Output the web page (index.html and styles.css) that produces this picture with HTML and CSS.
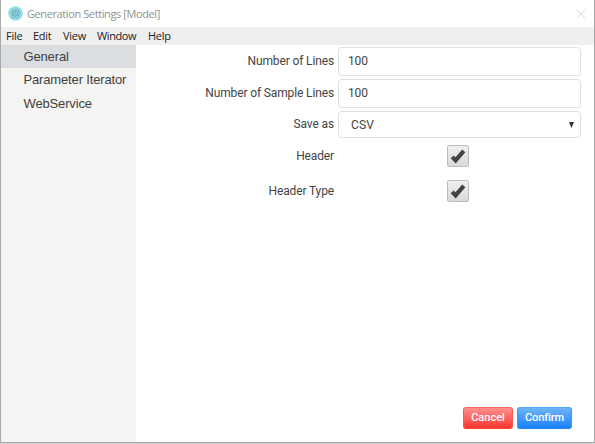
FILE: index.html
```html
<!DOCTYPE html>
<html lang="en">
<head>
<meta charset="utf-8">
<title>Generation Settings [Model]</title>
<link rel="stylesheet" href="styles.css">
</head>
<body>
<div class="window">
  <header class="titlebar">
    <svg class="logo" viewBox="0 0 15 15"><circle cx="7.5" cy="7.5" r="7.3" fill="#94dfeb"/><g fill="none" stroke="#6499a3" stroke-width=".55"><ellipse cx="7.5" cy="7.5" rx="5" ry="2"/><ellipse cx="7.5" cy="7.5" rx="5" ry="2" transform="rotate(60 7.5 7.5)"/><ellipse cx="7.5" cy="7.5" rx="5" ry="2" transform="rotate(120 7.5 7.5)"/></g><circle cx="7.5" cy="7.5" r=".6" fill="#5e929d"/></svg>
    <span class="title">Generation Settings [Model]</span>
    <svg class="close" viewBox="0 0 10 10"><path d="M.5 .5l9 9M9.5 .5l-9 9" stroke="#dedede" stroke-width="1"/></svg>
  </header>
  <nav class="menu"><span class="file">File</span><span class="edit">Edit</span><span class="view">View</span><span class="win">Window</span><span class="help">Help</span></nav>
  <div class="body">
    <aside class="sidebar">
      <div class="item active">General</div>
      <div class="item">Parameter Iterator</div>
      <div class="item">WebService</div>
    </aside>
    <main class="main">
      <div class="form">
        <span class="label">Number of Lines</span><div class="field">100</div>
        <span class="label">Number of Sample Lines</span><div class="field">100</div>
        <span class="label save">Save as</span><div class="field select"><span>CSV</span><svg class="arrow" viewBox="0 0 5 6"><path d="M0 0h5L2.5 6z" fill="#333"/></svg></div>
        <span class="label tick">Header</span><div class="check"><svg viewBox="0 0 16 16"><path d="M2.2 8.9L5.6 12.4 13.8 2.8" fill="none" stroke="#444" stroke-width="4.2"/></svg></div>
        <span class="label tick">Header Type</span><div class="check"><svg viewBox="0 0 16 16"><path d="M2.2 8.9L5.6 12.4 13.8 2.8" fill="none" stroke="#444" stroke-width="4.2"/></svg></div>
      </div>
      <footer class="actions">
        <div class="btn cancel">Cancel</div>
        <div class="btn confirm">Confirm</div>
      </footer>
    </main>
  </div>
</div>
</body>
</html>
```
FILE: styles.css
```css
* { box-sizing: border-box; }
body { margin: 0; background: #d2d2d2; overflow: hidden; }
.window { width: 595px; height: 443px; border: solid #a8a8a8; border-width: 0 1px 1px; background: #fff; display: flex; flex-direction: column; }
.titlebar { height: 27px; display: flex; align-items: center; padding: 0 8px 0 7px; font: 11px "Open Sans", sans-serif; color: #929292; }
.logo { width: 15px; height: 15px; margin-right: 4px; }
.title { flex: 1; white-space: nowrap; letter-spacing: -.4px; }
.close { width: 10px; height: 10px; }
.menu { height: 18px; background: #efefef; display: flex; padding-left: 5px; font: 11px/18px "Open Sans", sans-serif; color: #222; white-space: nowrap; letter-spacing: -.25px; }
.file { width: 27px; }
.edit { width: 30px; }
.view { width: 34px; }
.win { width: 51px; letter-spacing: -.4px; }
.body { flex: 1; display: flex; min-height: 0; }
.sidebar { width: 135px; background: #f4f4f2; font: 13px/23px "Liberation Sans", sans-serif; color: #414141; }
.item { height: 23px; margin-bottom: .4px; padding-left: 22.5px; letter-spacing: -.15px; white-space: nowrap; }
.item.active { background: #dadee1; line-height: 24px; }
.main { flex: 1; display: flex; flex-direction: column; justify-content: space-between; padding: 2px 13px 13px 0; }
.form { display: grid; grid-template-columns: 198px 243px; grid-template-rows: 32px 32px 34px 35px 35px; column-gap: 4px; align-items: start; font: 12px Roboto, sans-serif; color: #444; }
.label { text-align: right; line-height: 28px; letter-spacing: -.13px; white-space: nowrap; }
.label.save { line-height: 26px; }
.label.tick { line-height: 23px; }
.field { height: 29px; border: 1px solid #dfe0e0; border-radius: 4px; line-height: 27px; padding-left: 9px; background: #fff; letter-spacing: -.15px; }
.select { height: 27px; line-height: 26px; padding: 0 6px 0 12px; display: flex; align-items: center; justify-content: space-between; letter-spacing: .1px; }
.arrow { width: 5px; height: 6px; }
.check { width: 22px; height: 22px; margin-left: 109px; border: 1px solid #bcbcbc; border-radius: 2px; background: linear-gradient(#f0f0f0, #dadada); padding: 2px; }
.check svg { display: block; width: 16px; height: 16px; }
.actions { display: flex; justify-content: flex-end; gap: 4px; padding-right: 9px; }
.btn { height: 22px; border: 1px solid; border-radius: 3px; font: 500 11px/20px Roboto, sans-serif; color: #fff; text-align: center; }
.cancel { width: 50px; background: linear-gradient(#fd918d, #fc3630); border-color: #fc6662 #fc5652 #fc3d37; }
.confirm { width: 55px; background: linear-gradient(#6eb4f7, #1a82fb); border-color: #51a5fa #3897fa #2084f8; letter-spacing: -.1px; }
```
